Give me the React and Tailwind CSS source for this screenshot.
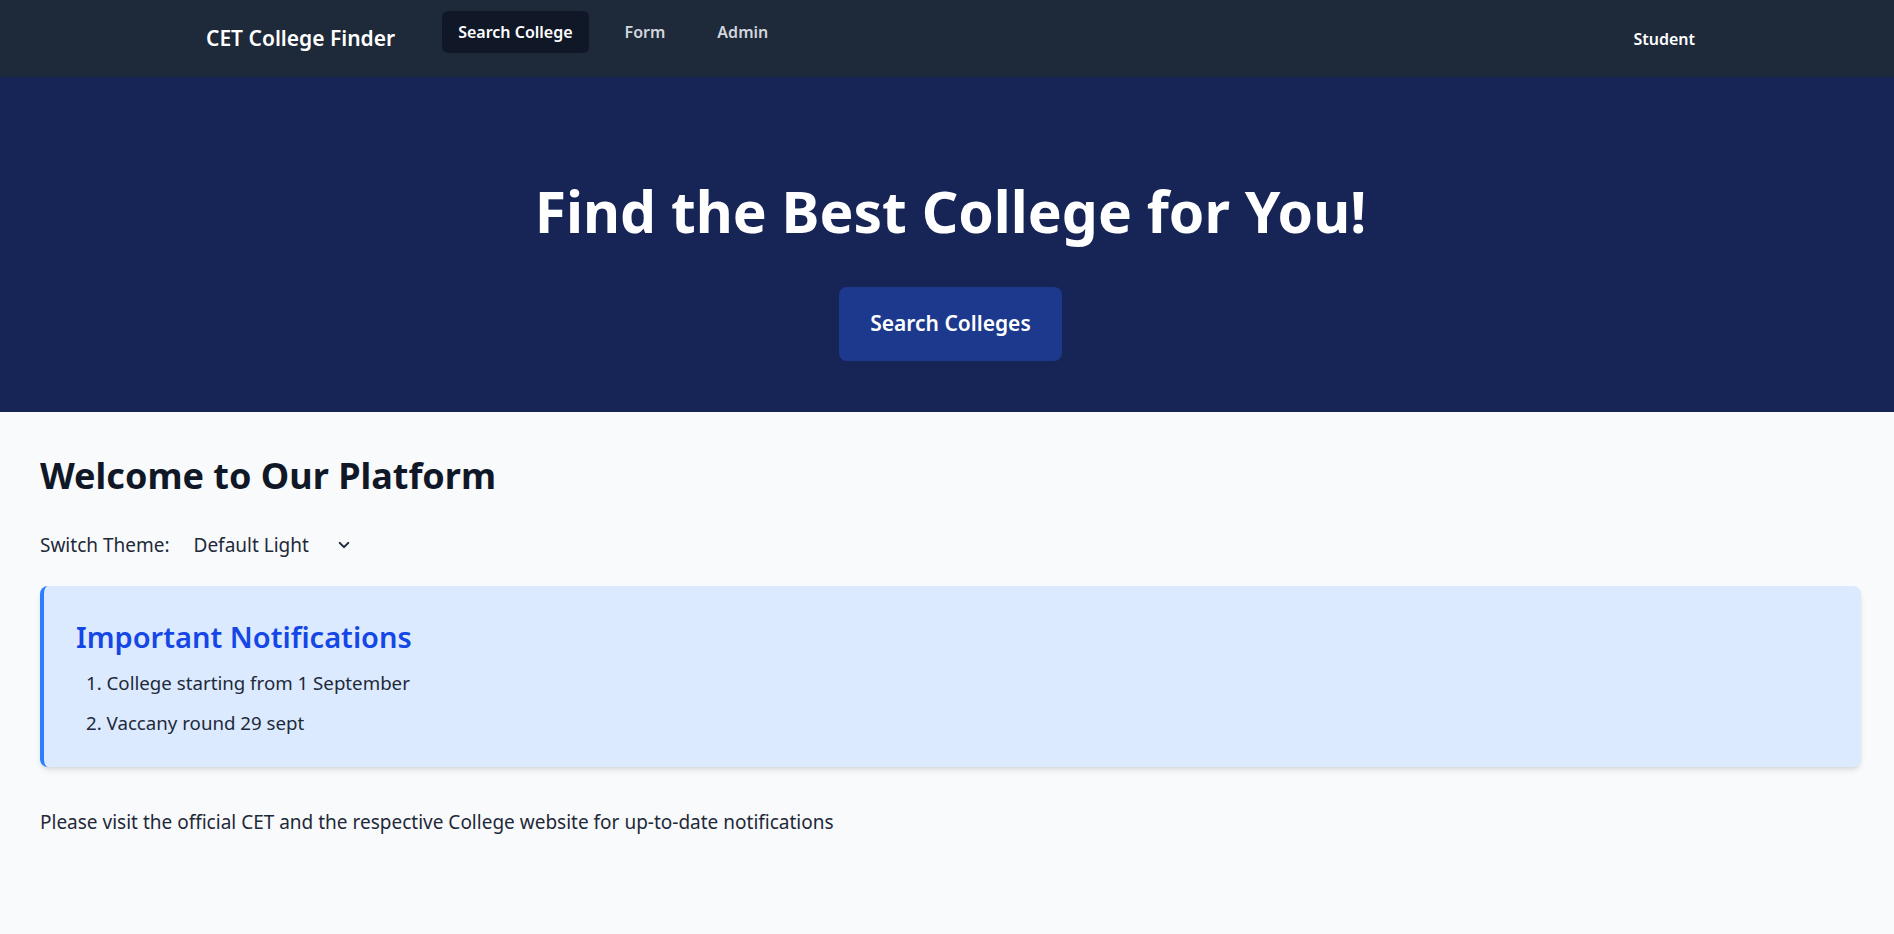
import React from 'react'

// Barra de navegación superior
function Navbar() {
  return (
    <nav className="h-[77px] bg-gray-800">
      <div className="flex h-full items-center justify-between pl-[206px] pr-[199px]">
        <div className="flex items-center">
          <span className="text-[21px] font-semibold text-white">CET College Finder</span>
          <ul className="mb-[13px] ml-[47px] flex items-center gap-5">
            <li>
              <a className="block rounded-md bg-gray-900 px-4 py-[9px] text-[16px] font-semibold text-white">
                Search College
              </a>
            </li>
            <li>
              <a className="block rounded-md px-4 py-[9px] text-[16px] font-semibold text-gray-300">Form</a>
            </li>
            <li>
              <a className="block rounded-md px-4 py-[9px] text-[16px] font-semibold text-gray-300">Admin</a>
            </li>
          </ul>
        </div>
        <span className="text-[16px] font-semibold text-white">Student</span>
      </div>
    </nav>
  )
}

// Banner principal
function Hero() {
  return (
    <section className="flex flex-col items-center bg-blue-950 pt-[104px] pb-[51px] pl-[7px]">
      <h1 className="text-[57px] leading-[60px] font-bold text-white">Find the Best College for You!</h1>
      <button className="mt-[46px] h-[74px] rounded-lg bg-blue-900 px-[31px] text-[21px] font-semibold text-white">
        Search Colleges
      </button>
    </section>
  )
}

export default function App() {
  return (
    <div
      className="min-h-[934px] bg-gray-50"
      style={{ fontFamily: '"Noto Sans", "Open Sans", sans-serif' }}
    >
      <Navbar />
      <Hero />
      <main className="pt-[44px] pl-10 pr-[33px]">
        <h2 className="text-[36px] leading-[40px] font-bold text-gray-900">Welcome to Our Platform</h2>
        <div className="mt-[35px] flex items-center text-[19px] leading-[28px] text-gray-800">
          <label>Switch Theme:</label>
          <div className="ml-[24px] flex items-center">
            <span>Default Light</span>
            <svg className="ml-[29px]" width="12" height="8" viewBox="0 0 14 8" fill="none" stroke="currentColor" strokeWidth="2.4" strokeLinecap="round" strokeLinejoin="round">
              <path d="M2 1.5L7 6.5L12 1.5" />
            </svg>
          </div>
        </div>
        <div className="mt-[27px] rounded-lg border-l-4 border-blue-500 bg-blue-100 px-[32px] pt-[33px] pb-[30px] shadow-md">
          <h3 className="text-[29px] leading-[36px] font-semibold text-blue-700">Important Notifications</h3>
          <ol className="mt-[14px] list-inside list-decimal space-y-[12px] pl-[10px] text-[18.7px] leading-[28px] text-gray-800">
            <li>College starting from 1 September</li>
            <li>Vaccany round 29 sept</li>
          </ol>
        </div>
        <p className="mt-[41px] text-[19px] leading-[28px] text-gray-800">
          Please visit the official CET and the respective College website for up-to-date notifications
        </p>
      </main>
    </div>
  )
}
